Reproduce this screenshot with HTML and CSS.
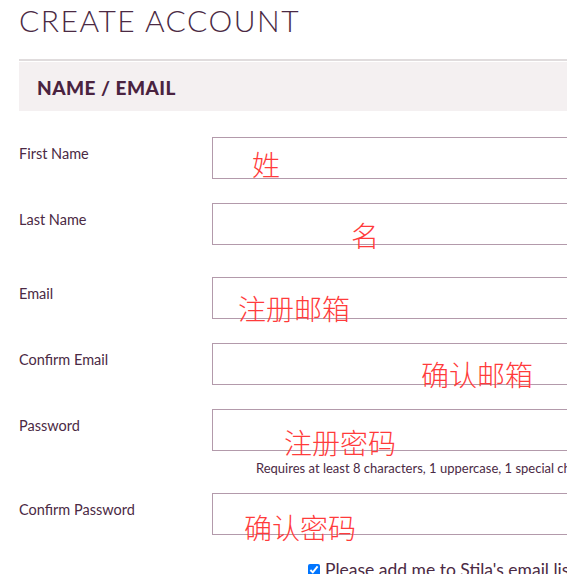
FILE: index.html
```html
<!DOCTYPE html>
<html lang="en">
<head>
  <meta charset="UTF-8">
  <meta name="viewport" content="width=device-width, initial-scale=1.0">
  <title>Create Account</title>
  <link rel="stylesheet" href="styles.css">
</head>
<body>
  <div class="page">
    <h1 class="title">CREATE ACCOUNT</h1>
    <div class="divider"></div>

    <!-- Name / Email section -->
    <div class="section-head">NAME / EMAIL</div>

    <form class="account-form">
      <div class="row">
        <label for="firstName">First Name</label>
        <input type="text" id="firstName">
      </div>
      <div class="row row-wide">
        <label for="lastName">Last Name</label>
        <input type="text" id="lastName">
      </div>
      <div class="row">
        <label for="email">Email</label>
        <input type="text" id="email">
      </div>
      <div class="row">
        <label for="confirmEmail">Confirm Email</label>
        <input type="text" id="confirmEmail">
      </div>
      <div class="row row-hint">
        <label for="password">Password</label>
        <div>
          <input type="password" id="password">
          <p class="hint">Requires at least 8 characters, 1 uppercase, 1 special character</p>
        </div>
      </div>
      <div class="row">
        <label for="confirmPassword">Confirm Password</label>
        <input type="password" id="confirmPassword">
      </div>
      <div class="optin">
        <input type="checkbox" id="optin" checked>
        <label for="optin">Please add me to Stila's email list</label>
      </div>
    </form>

    <!-- anotações -->
    <span class="note note-1">姓</span>
    <span class="note note-2">名</span>
    <span class="note note-3">注册邮箱</span>
    <span class="note note-4">确认邮箱</span>
    <span class="note note-5">注册密码</span>
    <span class="note note-6">确认密码</span>
  </div>
</body>
</html>
```

FILE: styles.css
```css
body {
  margin: 0;
  overflow: hidden;
  font-family: Lato, "Liberation Sans", sans-serif;
  color: #4b2a44;
}
.page {
  position: relative;
  width: 760px;
  padding-left: 19px;
}
.title {
  margin: 0;
  padding-top: 3px;
  font-size: 30px;
  line-height: 34px;
  font-weight: 300;
  letter-spacing: 1.5px;
  color: #4b2a44;
}
.divider {
  margin-top: 22px;
  border-top: 2px solid #e0dcdd;
}
.section-head {
  margin-top: 1px;
  height: 49px;
  padding-left: 18px;
  background: #f4f0f1;
  font-size: 19px;
  font-weight: 900;
  line-height: 52px;
  letter-spacing: 0.5px;
  color: #4a2340;
}
.account-form {
  padding-top: 26px;
}
.row {
  display: grid;
  grid-template-columns: 193px 1fr;
  margin-bottom: 24px;
}
.row-wide {
  margin-bottom: 32px;
}
.row-hint {
  margin-bottom: 17px;
}
.row label {
  padding-top: 7px;
  font-size: 14.5px;
  line-height: 20px;
}
.row input {
  box-sizing: border-box;
  display: block;
  width: 420px;
  height: 42px;
  margin: 0;
  border: 1px solid #b39aab;
  background: #fff;
}
.hint {
  margin: 9px 0 0 44px;
  white-space: nowrap;
  font-size: 13px;
  line-height: 16px;
}
.optin {
  display: flex;
  align-items: center;
  gap: 5px;
  margin-top: 16px;
  padding-left: 289px;
  white-space: nowrap;
  font-size: 17.5px;
}
.optin input {
  width: 12px;
  height: 12px;
  margin: 0;
}
.note {
  position: absolute;
  font-family: "Noto Sans CJK SC", sans-serif;
  font-weight: 300;
  font-size: 28px;
  line-height: 1;
  color: #ff3b3b;
  white-space: nowrap;
}
.note-1 { left: 252px; top: 150px; }
.note-2 { left: 351px; top: 221px; }
.note-3 { left: 238px; top: 294px; }
.note-4 { left: 421px; top: 360px; }
.note-5 { left: 284px; top: 428px; }
.note-6 { left: 244px; top: 513px; }
```
